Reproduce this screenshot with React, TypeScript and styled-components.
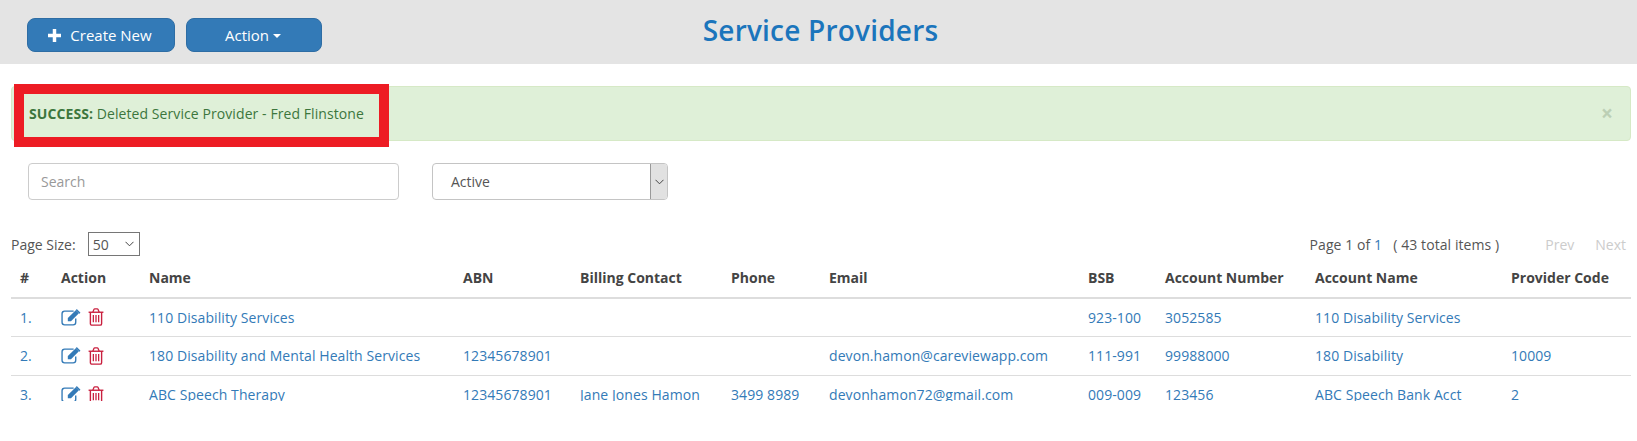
import React from "react";
import styled, { createGlobalStyle } from "styled-components";

const GlobalStyle = createGlobalStyle`
  html, body {
    margin: 0;
    padding: 0;
    background: #fff;
    font-family: "Open Sans", sans-serif;
    font-size: 14px;
    color: #555;
  }
`;

const Page = styled.div`
  width: 1637px;
  height: 441px;
  overflow: hidden;
`;

const Header = styled.header`
  height: 64px;
  background: #e4e4e4;
  display: flex;
  align-items: flex-start;
  padding: 18px 0 0 27px;
  box-sizing: border-box;
  position: relative;
  gap: 11px;
`;

const HeaderButton = styled.button<{ $width: number }>`
  width: ${(p) => p.$width}px;
  height: 34px;
  background: #337ab7;
  border: 1px solid #2e6da4;
  border-radius: 8px;
  color: #fff;
  font-family: inherit;
  font-size: 15px;
  display: flex;
  align-items: center;
  justify-content: center;
  gap: 9px;
  padding: 0 2px 0 0;
`;

const Caret = styled.span`
  display: inline-block;
  width: 0;
  height: 0;
  margin-left: -5px;
  margin-top: 2px;
  border-top: 4px solid #fff;
  border-left: 4px solid transparent;
  border-right: 4px solid transparent;
`;

const Title = styled.h1`
  position: absolute;
  left: 0;
  right: 0;
  top: 12px;
  margin: 0;
  padding-left: 4px;
  text-align: center;
  font-size: 28px;
  line-height: 36px;
  font-weight: 600;
  letter-spacing: 0.2px;
  color: #1b75bc;
`;

const Alert = styled.div`
  position: relative;
  box-sizing: border-box;
  margin: 22px 6px 0 11px;
  height: 55px;
  background: #dff0d8;
  border: 1px solid #d6e9c6;
  border-radius: 4px;
  color: #3c763d;
  font-size: 14px;
  letter-spacing: 0.08px;
  display: flex;
  align-items: center;
  justify-content: space-between;
  padding: 0 17px 0 17px;
`;

const Highlight = styled.div`
  position: absolute;
  left: 2px;
  top: -3px;
  width: 375px;
  height: 63px;
  box-sizing: border-box;
  border: 10px solid #ed1c24;
`;

const Close = styled.span`
  font-size: 21px;
  font-weight: 700;
  line-height: 1;
  color: #bccfb5;
`;

const Filters = styled.div`
  display: flex;
  margin: 22px 0 0 28px;
  gap: 33px;
`;

const SearchInput = styled.input`
  box-sizing: border-box;
  width: 371px;
  height: 37px;
  border: 1px solid #ccc;
  border-radius: 4px;
  padding: 0 12px;
  font-family: inherit;
  font-size: 14px;
  color: #555;
  &::placeholder {
    color: #999;
  }
`;

const StatusSelect = styled.div`
  box-sizing: border-box;
  width: 236px;
  height: 37px;
  border: 1px solid #c4c4c4;
  border-radius: 4px;
  display: flex;
  justify-content: space-between;
  padding-left: 18px;
  line-height: 35px;
  overflow: hidden;
`;

const StatusArrow = styled.span`
  width: 16px;
  background: #e1e1e1;
  border-left: 1px solid #999;
  display: flex;
  align-items: center;
  justify-content: center;
`;

const Pager = styled.div`
  display: flex;
  align-items: center;
  justify-content: space-between;
  margin: 32px 11px 0 11px;
  height: 24px;
`;

const PageSize = styled.label`
  display: flex;
  align-items: center;
  gap: 12px;
`;

const SizeBox = styled.span`
  position: relative;
  display: flex;
`;

const SizeSelect = styled.select`
  appearance: none;
  box-sizing: border-box;
  width: 52px;
  height: 24px;
  padding: 0 0 0 4px;
  font-family: inherit;
  font-size: 14px;
  color: #555;
  background: #fff;
  border: 1px solid #767676;
  border-radius: 0;
`;

const SizeChevron = styled.span`
  position: absolute;
  right: 6px;
  top: 9px;
  display: flex;
  pointer-events: none;
`;

const PagerRight = styled.div`
  display: flex;
  align-items: center;
`;

const PageInfo = styled.span`
  margin-right: 25px;
  white-space: pre;
  letter-spacing: 0.08px;
`;

const PageNumber = styled.span`
  color: #337ab7;
`;

const PagerLink = styled.span`
  color: #ccc;
  margin-left: 21px;
`;

const TableWrap = styled.div`
  margin: 0 6px 0 11px;
  height: 145px;
  overflow: hidden;
`;

const Table = styled.table`
  width: 100%;
  table-layout: fixed;
  border-collapse: collapse;
`;

const Col = styled.col<{ $width: number }>`
  width: ${(p) => p.$width}px;
`;

const Th = styled.th`
  height: 42px;
  padding: 1px 8px 0;
  box-sizing: border-box;
  text-align: left;
  font-size: 14px;
  font-weight: 700;
  color: #444;
  border-bottom: 2px solid #ddd;
  white-space: nowrap;
  &:first-child {
    padding-left: 9px;
  }
`;

const Td = styled.td<{ $height: number }>`
  height: ${(p) => p.$height}px;
  padding: 0 8px;
  box-sizing: border-box;
  font-size: 14px;
  letter-spacing: 0.08px;
  color: #337ab7;
  border-bottom: 1px solid #ddd;
  white-space: nowrap;
  &:first-child {
    padding-left: 9px;
  }
`;

const Actions = styled.div`
  display: flex;
  align-items: center;
  gap: 7px;
`;

const columns: [string, number][] = [
  ["#", 42],
  ["Action", 88],
  ["Name", 314],
  ["ABN", 117],
  ["Billing Contact", 151],
  ["Phone", 98],
  ["Email", 259],
  ["BSB", 77],
  ["Account Number", 150],
  ["Account Name", 196],
  ["Provider Code", 128],
];

const rowHeights = [38, 39, 39];

const rows: string[][] = [
  ["1.", "110 Disability Services", "", "", "", "", "923-100", "3052585", "110 Disability Services", ""],
  ["2.", "180 Disability and Mental Health Services", "12345678901", "", "", "devon.hamon@careviewapp.com", "111-991", "99988000", "180 Disability", "10009"],
  ["3.", "ABC Speech Therapy", "12345678901", "Jane Jones Hamon", "3499 8989", "devonhamon72@gmail.com", "009-009", "123456", "ABC Speech Bank Acct", "2"],
];

function PlusIcon() {
  return (
    <svg width="13" height="13" viewBox="0 0 12 12" fill="#fff">
      <path d="M4.4 0h3.2v4.4H12v3.2H7.6V12H4.4V7.6H0V4.4h4.4z" />
    </svg>
  );
}

function EditIcon() {
  return (
    <svg width="20" height="17" viewBox="0 0 19 16" fill="none">
      <path
        d="M14 9v3.5a2.5 2.5 0 0 1-2.5 2.5h-8A2.5 2.5 0 0 1 1 12.5v-8A2.5 2.5 0 0 1 3.5 2H12"
        stroke="#337ab7"
        strokeWidth="1.3"
      />
      <path d="M6.5 8.5 14 1l3 3-7.5 7.5H6.5z" fill="#337ab7" />
      <path d="M15 0l3.5 3.4-1 1-3.5-3.4z" fill="#337ab7" />
    </svg>
  );
}

function TrashIcon() {
  return (
    <svg width="16" height="18" viewBox="0 0 15 17" fill="none" stroke="#c9203f">
      <path d="M0.5 4h14" strokeWidth="1.3" />
      <path d="M4.5 4l1-2.6a1 1 0 0 1 .9-.6h2.2a1 1 0 0 1 .9.6l1 2.6" strokeWidth="1.2" />
      <path d="M2.2 4v10.8a1.4 1.4 0 0 0 1.4 1.4h7.8a1.4 1.4 0 0 0 1.4-1.4V4" strokeWidth="1.3" />
      <path d="M5 6.5v7M7.5 6.5v7M10 6.5v7" strokeWidth="1.2" />
    </svg>
  );
}

function ChevronIcon() {
  return (
    <svg width="9" height="6" viewBox="0 0 9 6" fill="none" stroke="#444" strokeWidth="1">
      <path d="M0.5 0.8 4.5 4.8 8.5 0.8" />
    </svg>
  );
}

export default function App() {
  return (
    <Page>
      <GlobalStyle />
      <Header>
        <HeaderButton $width={148}>
          <PlusIcon />
          Create New
        </HeaderButton>
        <HeaderButton $width={136}>
          Action
          <Caret />
        </HeaderButton>
        <Title>Service Providers</Title>
      </Header>

      <Alert>
        <span>
          <strong>SUCCESS:</strong> Deleted Service Provider - Fred Flinstone
        </span>
        <Close>×</Close>
        <Highlight />
      </Alert>

      <Filters>
        <SearchInput placeholder="Search" />
        <StatusSelect>
          Active
          <StatusArrow>
            <ChevronIcon />
          </StatusArrow>
        </StatusSelect>
      </Filters>

      <Pager>
        <PageSize>
          Page Size:
          <SizeBox>
            <SizeSelect defaultValue="50">
              <option>50</option>
            </SizeSelect>
            <SizeChevron>
              <ChevronIcon />
            </SizeChevron>
          </SizeBox>
        </PageSize>
        <PagerRight>
          <PageInfo>
            Page 1 of <PageNumber>1</PageNumber>   ( 43 total items )
          </PageInfo>
          <PagerLink>Prev</PagerLink>
          <PagerLink>Next</PagerLink>
        </PagerRight>
      </Pager>

      <TableWrap>
        <Table>
          <colgroup>
            {columns.map(([label, width]) => (
              <Col key={label} $width={width} />
            ))}
          </colgroup>
          <thead>
            <tr>
              {columns.map(([label]) => (
                <Th key={label}>{label}</Th>
              ))}
            </tr>
          </thead>
          <tbody>
            {rows.map((row, r) => (
              <tr key={row[0]}>
                <Td $height={rowHeights[r]}>{row[0]}</Td>
                <Td $height={rowHeights[r]}>
                  <Actions>
                    <EditIcon />
                    <TrashIcon />
                  </Actions>
                </Td>
                {row.slice(1).map((cell, i) => (
                  <Td key={i} $height={rowHeights[r]}>
                    {cell}
                  </Td>
                ))}
              </tr>
            ))}
          </tbody>
        </Table>
      </TableWrap>
    </Page>
  );
}
